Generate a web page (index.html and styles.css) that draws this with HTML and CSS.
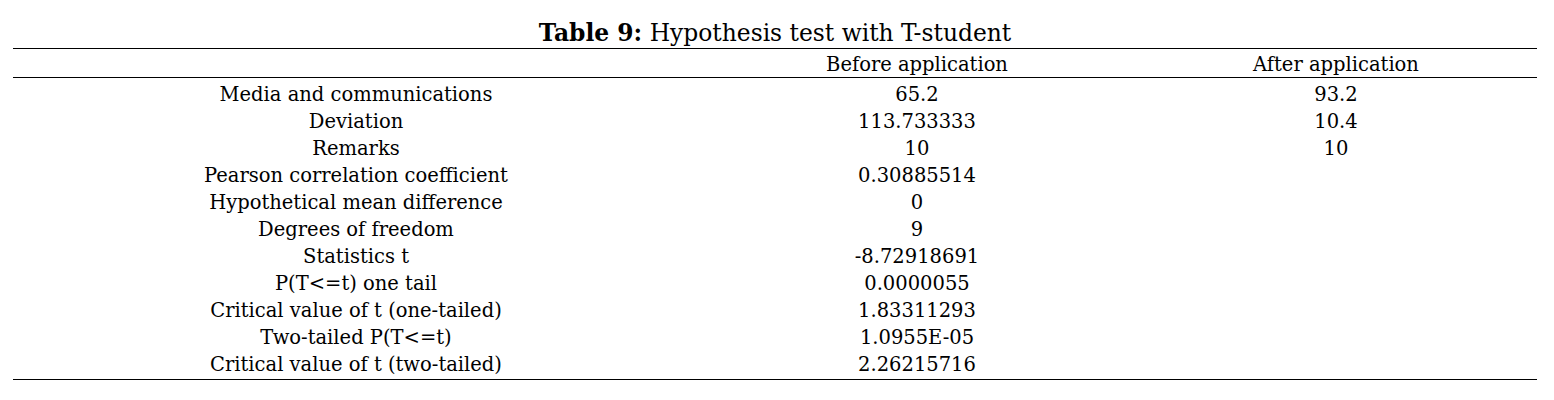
FILE: index.html
```html
<!DOCTYPE html>
<html>
<head>
<meta charset="utf-8">
<link rel="stylesheet" href="styles.css">
</head>
<body>
<div class="wrap">
  <div class="caption"><b>Table 9:</b> Hypothesis test with T-student</div>
  <table class="tbl">
    <thead>
      <tr><th class="c1"></th><th class="c2">Before application</th><th class="c3">After application</th></tr>
    </thead>
    <tbody>
      <tr><td>Media and communications</td><td>65.2</td><td>93.2</td></tr>
      <tr><td>Deviation</td><td>113.733333</td><td>10.4</td></tr>
      <tr><td>Remarks</td><td>10</td><td>10</td></tr>
      <tr><td>Pearson correlation coefficient</td><td>0.30885514</td><td></td></tr>
      <tr><td>Hypothetical mean difference</td><td>0</td><td></td></tr>
      <tr><td>Degrees of freedom</td><td>9</td><td></td></tr>
      <tr><td>Statistics t</td><td>-8.72918691</td><td></td></tr>
      <tr><td>P(T&lt;=t) one tail</td><td>0.0000055</td><td></td></tr>
      <tr><td>Critical value of t (one-tailed)</td><td>1.83311293</td><td></td></tr>
      <tr><td>Two-tailed P(T&lt;=t)</td><td>1.0955E-05</td><td></td></tr>
      <tr><td>Critical value of t (two-tailed)</td><td>2.26215716</td><td></td></tr>
    </tbody>
  </table>
</div>
</body>
</html>
```
FILE: styles.css
```css
html, body { margin: 0; padding: 0; background: #fff; }
body { font-family: "DejaVu Serif", "Liberation Serif", serif; color: #000; }
.wrap { padding: 18px 17px 0 13px; width: 1524px; }
.caption { text-align: center; font-size: 23.4px; line-height: 30px; }
.caption b { font-weight: bold; }
.tbl { width: 1524px; border-collapse: collapse; table-layout: fixed; font-size: 19.5px; }
.tbl th, .tbl td { padding: 0; text-align: center; font-weight: normal; white-space: nowrap; }
.tbl thead th { height: 28px; line-height: 25px; padding-top: 3px; box-sizing: border-box; border-top: 1px solid #000; border-bottom: 1px solid #000; }
.tbl .c1 { width: 686px; }
.tbl .c2 { width: 436px; }
.tbl .c3 { width: 402px; }
.tbl tbody td { height: 27px; line-height: 27px; }
.tbl tbody tr:first-child td { padding-top: 3px; }
.tbl tbody tr:last-child td { border-bottom: 1px solid #000; padding-bottom: 1px; }
```
